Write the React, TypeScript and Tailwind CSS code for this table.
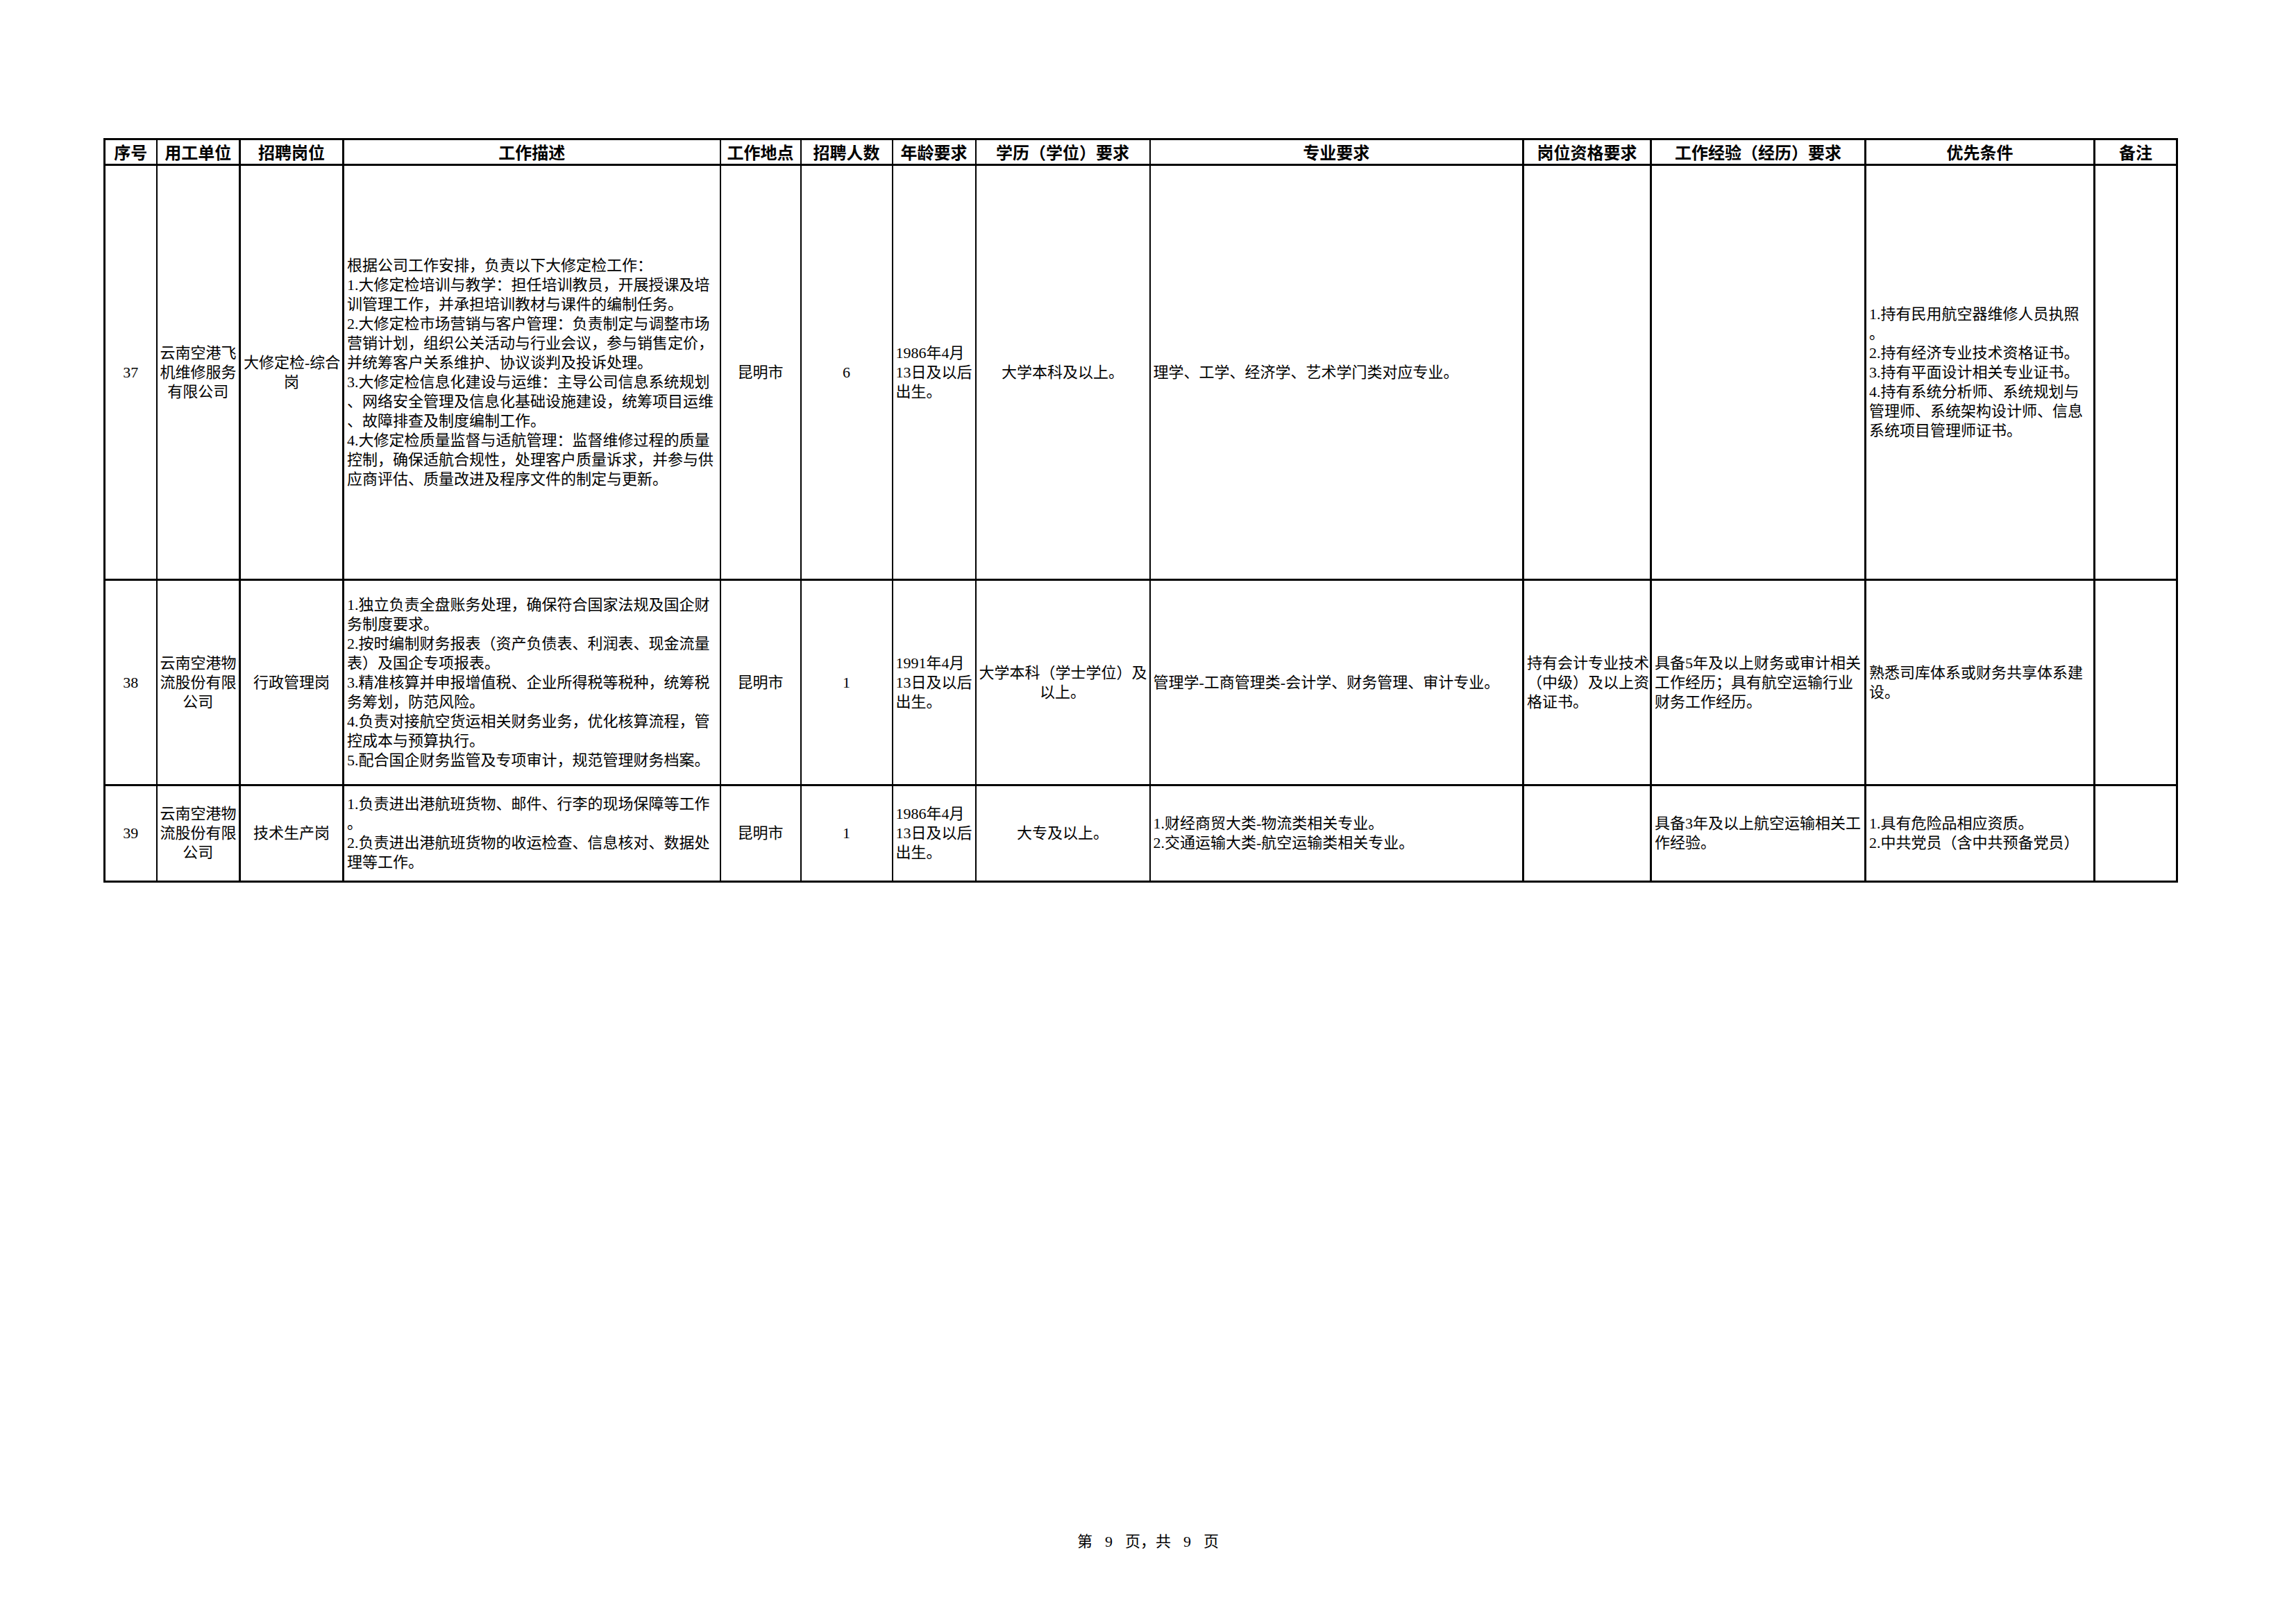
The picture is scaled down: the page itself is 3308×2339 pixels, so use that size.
import React from 'react';

type Align = 'c' | 'l';

interface Cell {
  lines: string[];
  align: Align;
}

interface Row {
  height: string;
  cells: Cell[];
}

const headers = [
  '序号',
  '用工单位',
  '招聘岗位',
  '工作描述',
  '工作地点',
  '招聘人数',
  '年龄要求',
  '学历（学位）要求',
  '专业要求',
  '岗位资格要求',
  '工作经验（经历）要求',
  '优先条件',
  '备注',
];

const colWidths = [
  'w-[75px]',
  'w-[120px]',
  'w-[149px]',
  'w-[543px]',
  'w-[116px]',
  'w-[132px]',
  'w-[120px]',
  'w-[251px]',
  'w-[538px]',
  'w-[184px]',
  'w-[309px]',
  'w-[330px]',
  'w-[119px]',
];

// thickness of the vertical rule on the right of each column
const rightRule = [
  'border-r-2',
  'border-r-[3px]',
  'border-r-[3px]',
  'border-r-2',
  'border-r-2',
  'border-r-2',
  'border-r-2',
  'border-r-2',
  'border-r-[3px]',
  'border-r-[3px]',
  'border-r-[3px]',
  'border-r-[3px]',
  'border-r-[3px]',
];

const c = (...lines: string[]): Cell => ({ lines, align: 'c' });
const l = (...lines: string[]): Cell => ({ lines, align: 'l' });

const rows: Row[] = [
  {
    height: 'h-[598px]',
    cells: [
      c('37'),
      c('云南空港飞', '机维修服务', '有限公司'),
      c('大修定检-综合', '岗'),
      l(
        '根据公司工作安排，负责以下大修定检工作：',
        '1.大修定检培训与教学：担任培训教员，开展授课及培',
        '训管理工作，并承担培训教材与课件的编制任务。',
        '2.大修定检市场营销与客户管理：负责制定与调整市场',
        '营销计划，组织公关活动与行业会议，参与销售定价，',
        '并统筹客户关系维护、协议谈判及投诉处理。',
        '3.大修定检信息化建设与运维：主导公司信息系统规划',
        '、网络安全管理及信息化基础设施建设，统筹项目运维',
        '、故障排查及制度编制工作。',
        '4.大修定检质量监督与适航管理：监督维修过程的质量',
        '控制，确保适航合规性，处理客户质量诉求，并参与供',
        '应商评估、质量改进及程序文件的制定与更新。'
      ),
      c('昆明市'),
      c('6'),
      l('1986年4月', '13日及以后', '出生。'),
      c('大学本科及以上。'),
      l('理学、工学、经济学、艺术学门类对应专业。'),
      l(),
      l(),
      l(
        '1.持有民用航空器维修人员执照',
        '。',
        '2.持有经济专业技术资格证书。',
        '3.持有平面设计相关专业证书。',
        '4.持有系统分析师、系统规划与',
        '管理师、系统架构设计师、信息',
        '系统项目管理师证书。'
      ),
      l(),
    ],
  },
  {
    height: 'h-[296px]',
    cells: [
      c('38'),
      c('云南空港物', '流股份有限', '公司'),
      c('行政管理岗'),
      l(
        '1.独立负责全盘账务处理，确保符合国家法规及国企财',
        '务制度要求。',
        '2.按时编制财务报表（资产负债表、利润表、现金流量',
        '表）及国企专项报表。',
        '3.精准核算并申报增值税、企业所得税等税种，统筹税',
        '务筹划，防范风险。',
        '4.负责对接航空货运相关财务业务，优化核算流程，管',
        '控成本与预算执行。',
        '5.配合国企财务监管及专项审计，规范管理财务档案。'
      ),
      c('昆明市'),
      c('1'),
      l('1991年4月', '13日及以后', '出生。'),
      c('大学本科（学士学位）及', '以上。'),
      l('管理学-工商管理类-会计学、财务管理、审计专业。'),
      l('持有会计专业技术', '（中级）及以上资', '格证书。'),
      l('具备5年及以上财务或审计相关', '工作经历；具有航空运输行业', '财务工作经历。'),
      l('熟悉司库体系或财务共享体系建', '设。'),
      l(),
    ],
  },
  {
    height: 'h-[139px]',
    cells: [
      c('39'),
      c('云南空港物', '流股份有限', '公司'),
      c('技术生产岗'),
      l(
        '1.负责进出港航班货物、邮件、行李的现场保障等工作',
        '。',
        '2.负责进出港航班货物的收运检查、信息核对、数据处',
        '理等工作。'
      ),
      c('昆明市'),
      c('1'),
      l('1986年4月', '13日及以后', '出生。'),
      c('大专及以上。'),
      l('1.财经商贸大类-物流类相关专业。', '2.交通运输大类-航空运输类相关专业。'),
      l(),
      l('具备3年及以上航空运输相关工', '作经验。'),
      l('1.具有危险品相应资质。', '2.中共党员（含中共预备党员）'),
      l(),
    ],
  },
];

function BodyCell({ cell, rule }: { cell: Cell; rule: string }) {
  return (
    <td
      className={`${rule} border-l-2 border-b-[3px] border-black p-0 px-[4px] align-middle overflow-hidden ${
        cell.align === 'c' ? 'text-center' : 'text-left'
      }`}
    >
      {cell.lines.map((line, i) => (
        <div key={i} className="whitespace-nowrap leading-[28px]">
          {line}
        </div>
      ))}
    </td>
  );
}

export default function App() {
  return (
    <div className="w-[3308px] h-[2339px] bg-white text-black flex flex-col font-['Liberation_Serif','Noto_Sans_CJK_SC',serif] text-[22px]">
      <div className="pt-[199px] pl-[149px]">
        <table className="table-fixed border-collapse border-[3px] border-black w-[2989px]">
          <colgroup>
            {colWidths.map((w, i) => (
              <col key={i} className={w} />
            ))}
          </colgroup>
          <thead>
            <tr className="h-[37px]">
              {headers.map((h, i) => (
                <th
                  key={h}
                  className={`${rightRule[i]} border-l-2 border-b-[3px] border-black p-0 text-center align-middle whitespace-nowrap font-['Noto_Sans_CJK_SC',sans-serif] font-bold text-[24px] leading-[30px]`}
                >
                  {h}
                </th>
              ))}
            </tr>
          </thead>
          <tbody>
            {rows.map((row, r) => (
              <tr key={r} className={row.height}>
                {row.cells.map((cell, i) => (
                  <BodyCell key={i} cell={cell} rule={rightRule[i]} />
                ))}
              </tr>
            ))}
          </tbody>
        </table>
      </div>

      {/* 页脚 */}
      <div className="mt-auto mb-[103px] flex justify-center text-[22px] leading-[28px]">
        <span>第</span>
        <span className="mx-[18px]">9</span>
        <span>页，共</span>
        <span className="mx-[18px]">9</span>
        <span>页</span>
      </div>
    </div>
  );
}
